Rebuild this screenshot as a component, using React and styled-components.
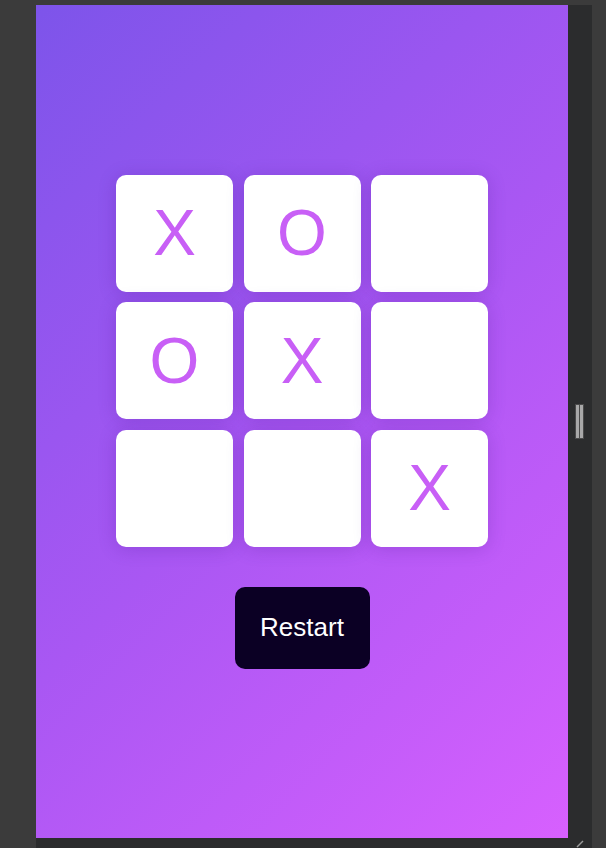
import React, { useState } from "react";
import styled, { createGlobalStyle } from "styled-components";

const Global = createGlobalStyle`
  html, body { margin: 0; padding: 0; background: #3b3b3b; overflow: hidden; }
  body { font-family: "Liberation Sans", Arial, sans-serif; }
`;

const Frame = styled.div`
  margin: 5px 0 0 36px;
  width: 556px;
  height: 843px;
  background: #2b2c2d;
  display: grid;
  grid-template-columns: 532px 24px;
  grid-template-rows: 833px 10px;
`;

const Stage = styled.main`
  background: linear-gradient(135deg, #7d54ea 0%, #a957f3 50%, #d760fe 100%);
  display: flex;
  flex-direction: column;
  align-items: center;
  justify-content: center;
  gap: 40px;
`;

const Gutter = styled.div`
  display: flex;
  align-items: center;
  justify-content: center;
  gap: 1px;
  padding-right: 2px;
`;

const Bar = styled.span`
  width: 3px;
  height: 33px;
  background: #a8a8a8;
  box-shadow: 0 0 0 1px #4a4a4a;
`;

const Corner = styled.div`
  grid-column: 2;
  display: flex;
  justify-content: flex-start;
  align-items: flex-end;
  padding-left: 8px;
`;

const Board = styled.div`
  display: grid;
  grid-template-columns: repeat(3, 117px);
  grid-auto-rows: 117px;
  gap: 10.5px;
`;

const Cell = styled.button`
  border: none;
  margin: 0;
  padding: 0;
  background: #ffffff;
  border-radius: 10px;
  box-shadow: 0 2px 18px rgba(70, 20, 140, 0.22);
  display: flex;
  align-items: center;
  justify-content: center;
  font-family: "Liberation Sans", Arial, sans-serif;
  font-size: 64px;
  line-height: 1;
  color: #c85ff6;
  cursor: pointer;
`;

const Restart = styled.button`
  width: 135px;
  height: 82px;
  border: none;
  border-radius: 10px;
  background: #0b0024;
  color: #ffffff;
  font-family: "Liberation Sans", Arial, sans-serif;
  font-size: 26px;
  cursor: pointer;
`;

const initial = ["X", "O", "", "O", "X", "", "", "", "X"];

export default function App() {
  const [cells, setCells] = useState(initial);
  return (
    <>
      <Global />
      <Frame>
        <Stage>
          <Board>
            {cells.map((v, i) => (
              <Cell key={i}>{v}</Cell>
            ))}
          </Board>
          <Restart onClick={() => setCells(Array(9).fill(""))}>Restart</Restart>
        </Stage>
        <Gutter>
          <Bar />
          <Bar />
        </Gutter>
        <div />
        <Corner>
          <svg width="8" height="8" viewBox="0 0 8 8">
            <line x1="1" y1="7" x2="7" y2="1" stroke="#9a9a9a" strokeWidth="1.5" />
          </svg>
        </Corner>
      </Frame>
    </>
  );
}
